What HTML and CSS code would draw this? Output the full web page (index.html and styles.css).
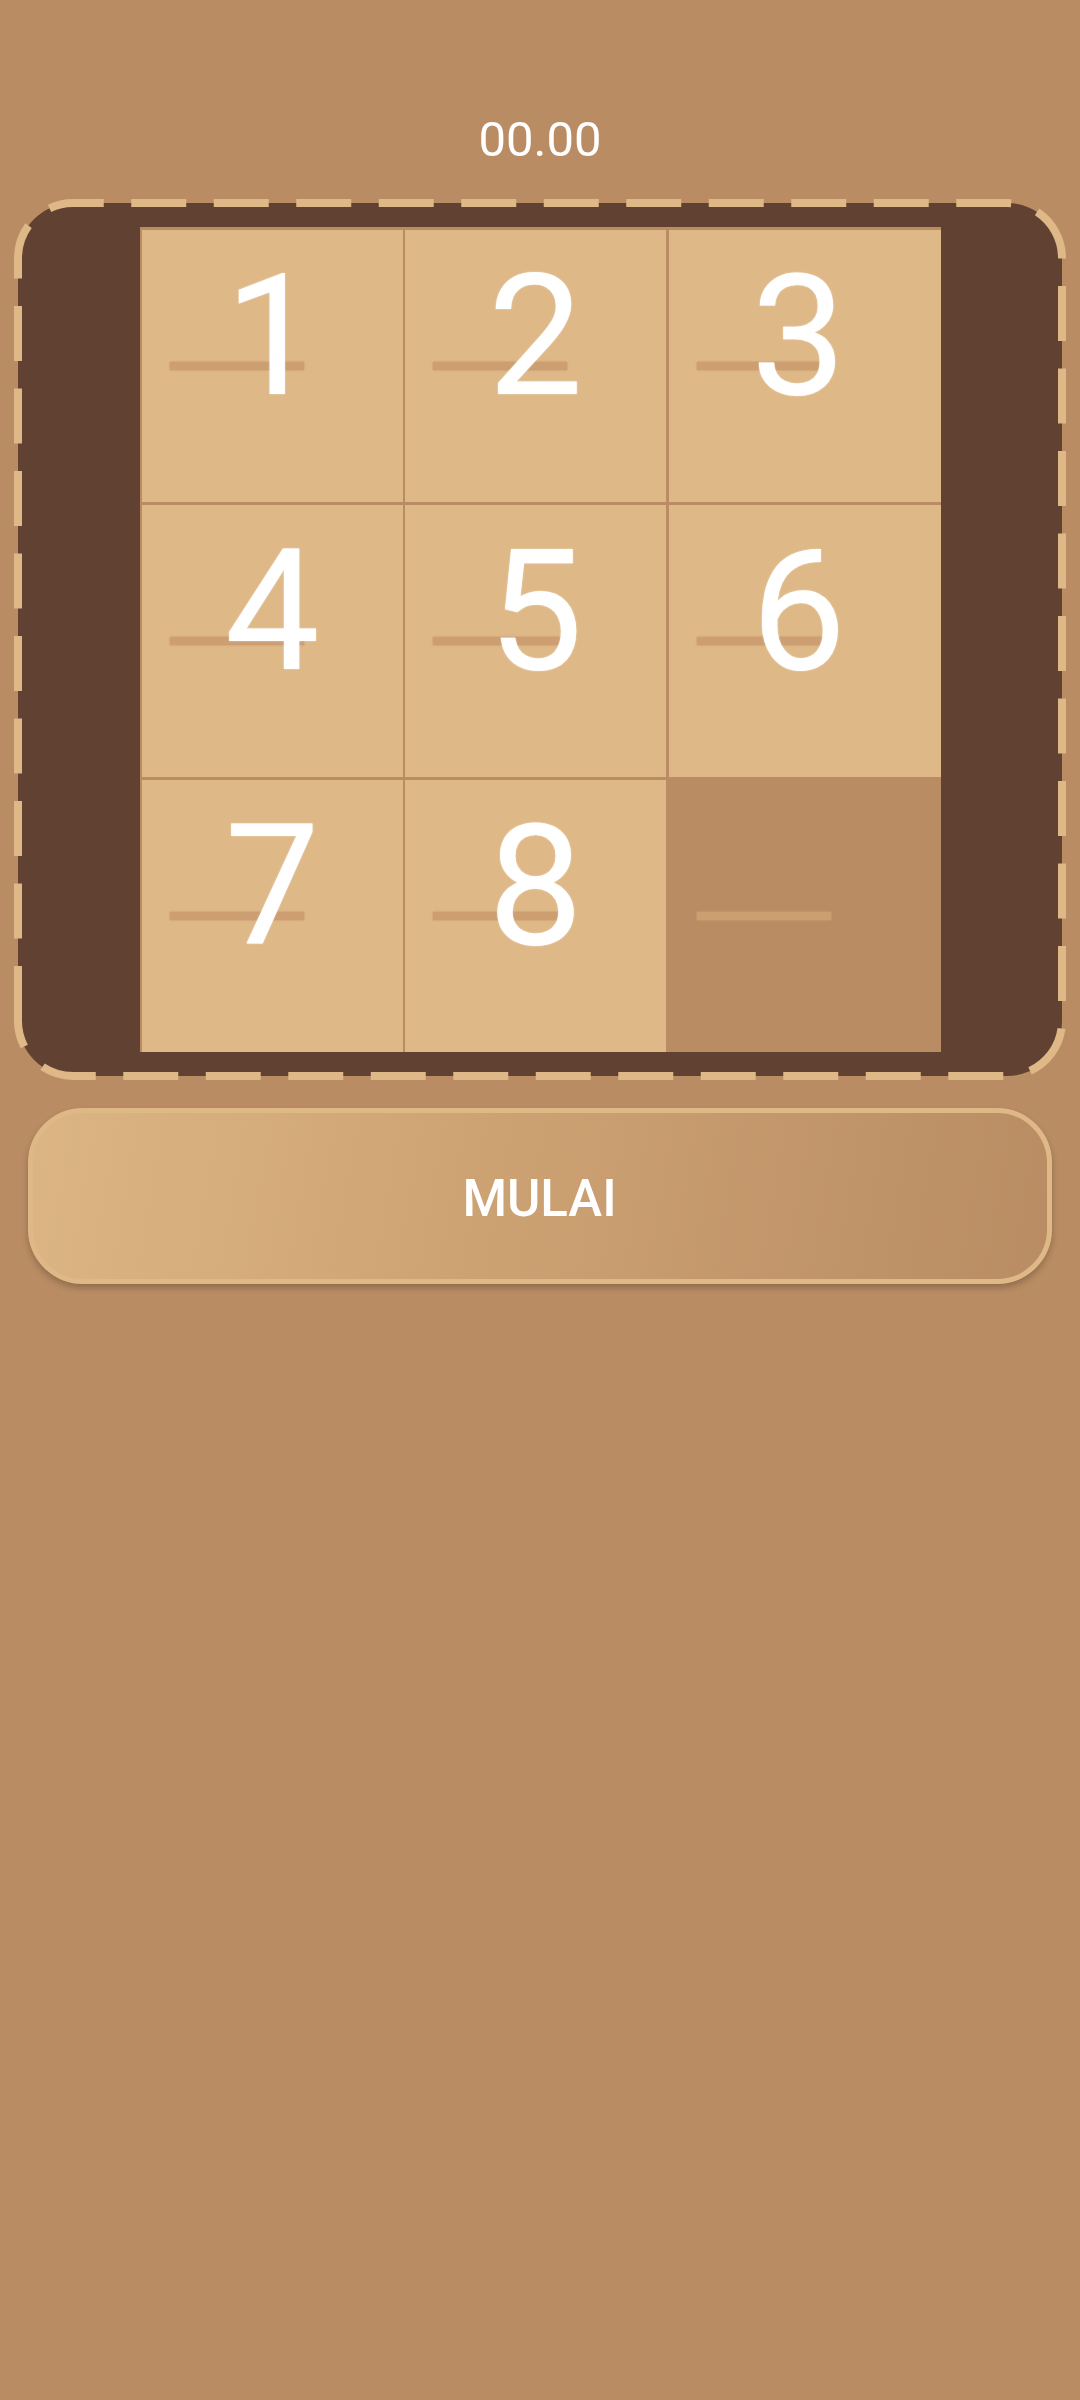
FILE: index.html
```html
<!DOCTYPE html>
<html>
<head>
<meta charset="utf-8">
<title>Puzzle</title>
<link rel="stylesheet" href="styles.css">
</head>
<body>
<div class="screen">
  <div class="timer">00.00</div>
  <div class="board">
    <svg class="board-dash" width="1044" height="873" viewBox="0 0 1044 873">
      <path d="M0,818 V55 A55,55 0 0 1 55,0 H989 A55,55 0 0 1 1044,55 V818 A55,55 0 0 1 989,873 H55 A55,55 0 0 1 0,818 Z" />
    </svg>
    <div class="grid">
      <div class="tile"><span class="tile-line"></span><span class="tile-num">1</span></div>
      <div class="tile"><span class="tile-line"></span><span class="tile-num">2</span></div>
      <div class="tile"><span class="tile-line"></span><span class="tile-num">3</span></div>
      <div class="tile"><span class="tile-line"></span><span class="tile-num">4</span></div>
      <div class="tile"><span class="tile-line"></span><span class="tile-num">5</span></div>
      <div class="tile"><span class="tile-line"></span><span class="tile-num">6</span></div>
      <div class="tile"><span class="tile-line"></span><span class="tile-num">7</span></div>
      <div class="tile"><span class="tile-line"></span><span class="tile-num">8</span></div>
      <div class="tile tile-empty"><span class="tile-line"></span></div>
    </div>
  </div>
  <button class="start-btn" type="button">MULAI</button>
</div>
</body>
</html>
```
FILE: styles.css
```css
html, body {
  margin: 0;
  padding: 0;
  background: #b98c63;
}

body {
  font-family: Roboto, "Noto Sans", "Liberation Sans", sans-serif;
}

.screen {
  width: 1080px;
  min-height: 2400px;
  display: flex;
  flex-direction: column;
}

.timer {
  padding-top: 111px;
  height: 57px;
  line-height: 57px;
  font-size: 49px;
  font-weight: 400;
  color: #ffffff;
  text-align: center;
}

.board {
  position: relative;
  margin: 35px 18px 0 18px;
  height: 873px;
  box-sizing: border-box;
  padding: 24px 0;
  background: #614132;
  border-radius: 55px;
  display: flex;
  justify-content: center;
}

.board-dash {
  position: absolute;
  left: 0;
  top: 0;
  overflow: visible;
  pointer-events: none;
}

.board-dash path {
  fill: none;
  stroke: #deb887;
  stroke-width: 8;
  stroke-dasharray: 55 27.5;
}

.grid {
  width: 801px;
  height: 825px;
  box-sizing: border-box;
  padding: 2.7px 0 0 2.7px;
  background: #b98c63;
  display: grid;
  grid-template-columns: 260.5px 260.5px 1fr;
  grid-template-rows: repeat(3, 1fr);
  gap: 2.7px;
}

.tile {
  background: #deb887;
  display: grid;
  overflow: hidden;
}

.tile > span {
  grid-area: 1 / 1;
}

.tile-empty {
  background: transparent;
}

.tile-line {
  align-self: center;
  justify-self: start;
  margin-left: 28px;
  width: 134px;
  height: 8px;
  border-radius: 1px;
  background: #cc9e71;
  box-shadow: 0 0 1.5px 0.5px #cc9e71;
}

.tile-num {
  position: relative;
  align-self: start;
  justify-self: start;
  width: 260px;
  margin-top: 22px;
  text-align: center;
  font-size: 169px;
  line-height: 169px;
  font-weight: 400;
  color: #ffffff;
  text-shadow: 0 0 2px rgba(255, 255, 255, 0.6);
}

.start-btn {
  margin: 32px 28.5px 0 27.5px;
  height: 176px;
  box-sizing: border-box;
  padding: 5px 0 0 0;
  border: 5.5px solid #deb887;
  border-radius: 55px;
  background: linear-gradient(100deg, #dcb584 0%, #cda273 45%, #b98c63 100%);
  color: #ffffff;
  font-family: Roboto, "Noto Sans", "Liberation Sans", sans-serif;
  font-size: 51px;
  font-weight: 500;
  box-shadow: 0 4px 6px rgba(0, 0, 0, 0.22);
}
```
